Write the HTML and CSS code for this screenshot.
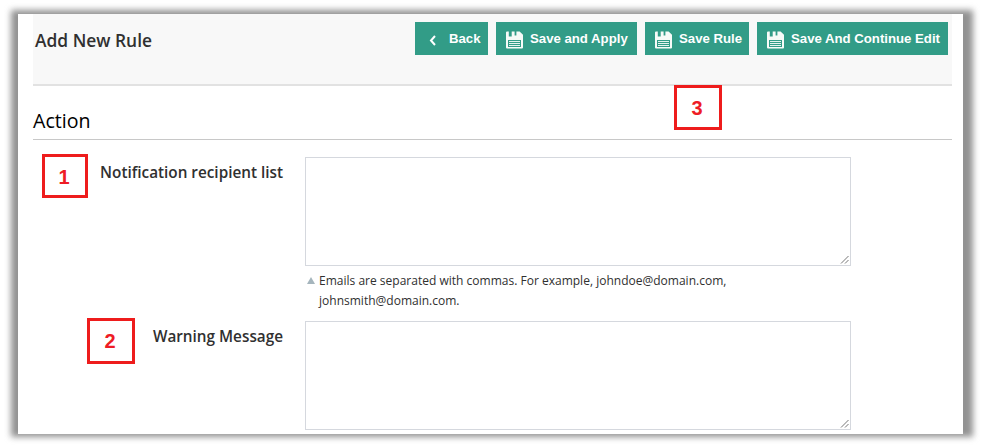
FILE: index.html
```
<!DOCTYPE html>
<html lang="en">
<head>
<meta charset="utf-8">
<title>Add New Rule</title>
<link rel="stylesheet" href="styles.css">
</head>
<body>
<svg width="0" height="0" class="defs" aria-hidden="true">
  <symbol id="disk" viewBox="0 0 17 18">
    <path fill="#f7fbf8" fill-rule="evenodd" d="M1 .5H2.8V5.5H5.7V.5H8.6V4.6H10.4V.5H13.6L17 3.8V16.5Q17 17.5 16 17.5H1Q0 17.5 0 16.5V1.5Q0 .5 1 .5ZM2 9V16H15V9Z"/>
    <path stroke="#e4f3ee" d="M3 10.5H14M3 12.5H14M3 14.5H14"/>
  </symbol>
</svg>
<main class="panel">
  <header class="header">
    <h1 class="title">Add New Rule</h1>
    <nav class="actions">
      <button class="btn back"><svg class="chevron" viewBox="0 0 8 11"><path d="M6 1 2 5.5 6 10" fill="none" stroke="#fff" stroke-width="2"/></svg><span>Back</span></button>
      <button class="btn apply"><svg class="disk"><use href="#disk"/></svg><span>Save and Apply</span></button>
      <button class="btn save"><svg class="disk"><use href="#disk"/></svg><span>Save Rule</span></button>
      <button class="btn continue"><svg class="disk"><use href="#disk"/></svg><span>Save And Continue Edit</span></button>
    </nav>
  </header>
  <h2 class="section">Action</h2>
  <div class="row">
    <label class="label recipients" for="recipients">Notification recipient list</label>
    <div class="field">
      <textarea id="recipients"></textarea>
      <svg class="grip" viewBox="0 0 9 9"><path d="M1 8.5 8.5 1M5 8.5 8.5 5"/></svg>
      <p class="hint">Emails are separated with commas. For example, johndoe@domain.com,<br>johnsmith@domain.com.</p>
    </div>
  </div>
  <div class="row last">
    <label class="label warning" for="warning">Warning Message</label>
    <div class="field">
      <textarea id="warning"></textarea>
      <svg class="grip" viewBox="0 0 9 9"><path d="M1 8.5 8.5 1M5 8.5 8.5 5"/></svg>
    </div>
  </div>
  <span class="marker one">1</span>
  <span class="marker two">2</span>
  <span class="marker three">3</span>
</main>
</body>
</html>
```
FILE: styles.css
```
* { box-sizing: border-box; }
body { display: flow-root; margin: 0; height: 448px; overflow: hidden; background: #fff; font-family: "Open Sans", sans-serif; color: #303030; }
.defs { position: absolute; }
.panel { position: relative; width: 945px; height: 420px; margin: 14px 0 0 18px; padding: 0 11px 0 15px; background: #fff; }
.panel::before { content: ""; position: absolute; z-index: -1; inset: -4px -10px -3px -7px; background: #929292; filter: blur(3.2px); }
.header { display: flex; justify-content: space-between; align-items: flex-start; height: 72px; padding: 8px 4px 0 2px; background: #f8f8f8; border-bottom: 2px solid #e2e2e2; }
.title { margin: 5px 0 0; font-size: 17.4px; line-height: 26px; font-weight: 600; white-space: nowrap; }
.actions { display: flex; gap: 8px; }
.btn { display: flex; align-items: center; height: 33px; padding: 0 0 0 10px; border: 0; border-radius: 0; background: #329c87; color: #fff; font: bold 13.2px/33px "Liberation Sans", Arial, sans-serif; white-space: nowrap; }
.btn span { display: block; height: 33px; }
.back { width: 73px; padding-left: 14px; }
.apply { width: 141px; }
.save { width: 104px; }
.continue { width: 191px; }
.chevron { width: 8px; height: 11px; margin: 3px 12px 0 0; }
.disk { width: 17px; height: 18px; margin: 2px 7px 0 0; }
.section { height: 54px; margin: 0 0 17px; padding-top: 21px; border-bottom: 1px solid #c8c8c8; font-size: 19.6px; line-height: 28px; font-weight: 400; color: #000; }
.row { display: flex; height: 164px; }
.last { height: 110px; }
.label { width: 250px; padding-top: 4px; text-align: right; font-size: 15.3px; line-height: 22px; font-weight: 600; white-space: nowrap; }
.field { position: relative; margin-left: 22px; width: 546px; }
textarea { display: block; width: 546px; height: 109px; margin: 0; padding: 4px; border: 1px solid #d5d8de; background: #fff; resize: none; outline: 0; }
.grip { position: absolute; left: 535px; top: 98px; width: 9px; height: 9px; }
.grip path { stroke: #777; stroke-width: 1; fill: none; }
.hint { position: relative; margin: 5px 0 0 14px; font-size: 12.03px; line-height: 20px; white-space: nowrap; }
.hint::before { content: ""; position: absolute; left: -12px; top: 6px; border: 4px solid transparent; border-top: 0; border-bottom: 7px solid #a5b5bd; }
.marker { position: absolute; display: flex; align-items: center; justify-content: center; width: 48px; height: 46px; padding: 0 2px 0 0; border: 3px solid #ee1c1c; color: #ee1c25; font: bold 20px/1 "Liberation Sans", Arial, sans-serif; }
.one { left: 24px; top: 140px; width: 46px; height: 44px; padding-top: 1px; }
.two { left: 69px; top: 304px; }
.three { left: 656px; top: 71px; height: 45px; }
```
